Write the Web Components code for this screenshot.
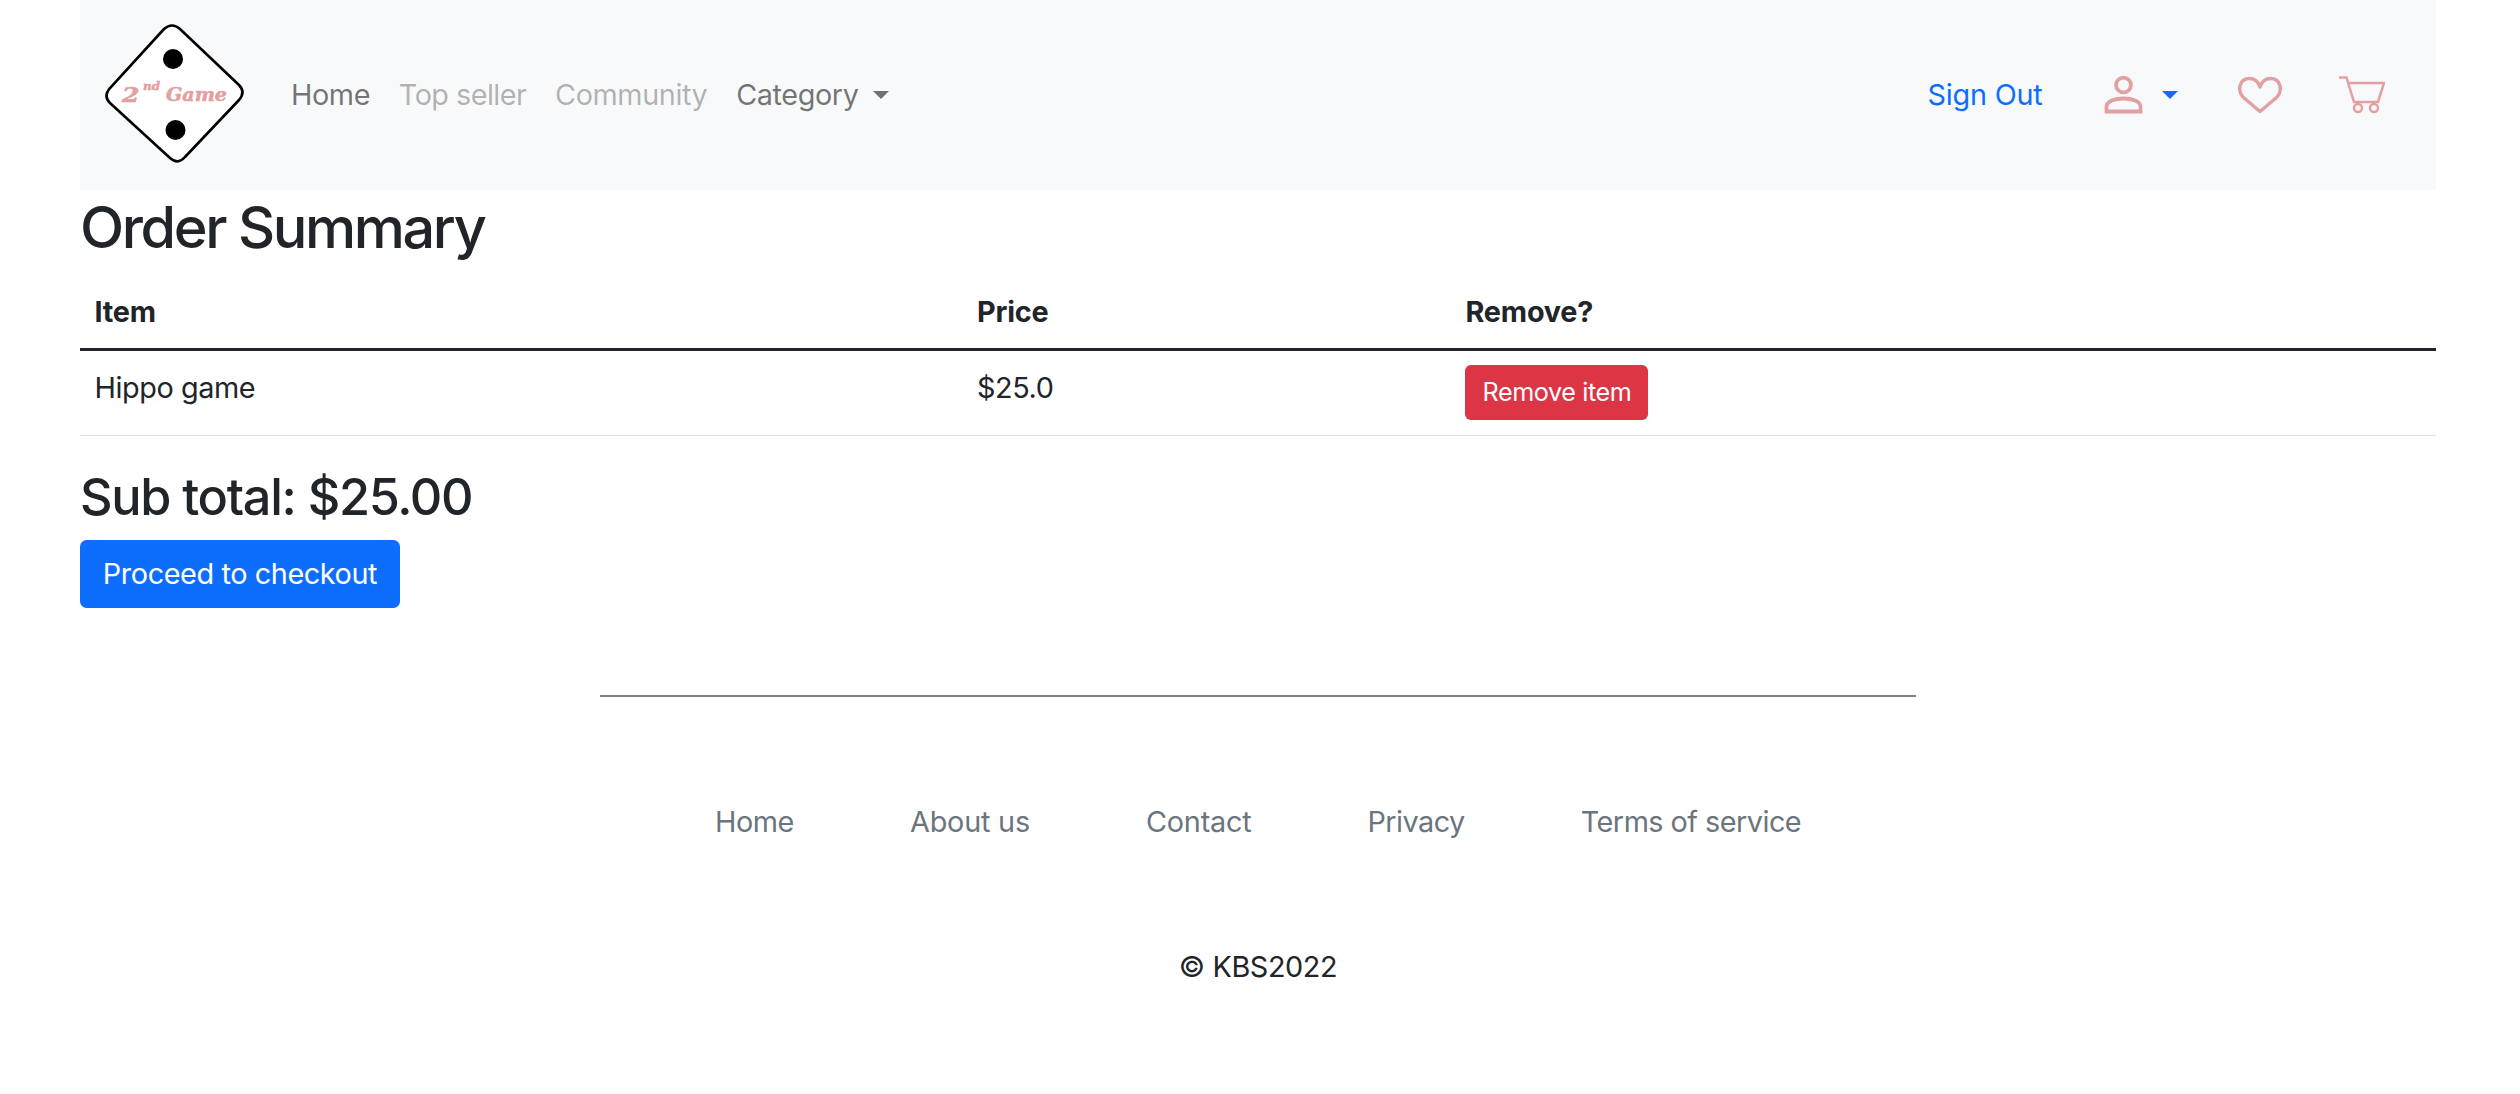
<!DOCTYPE html>
<html lang="en">
<head>
<meta charset="utf-8">
<title>Order Summary</title>
<style>
    html, body { margin: 0; background: #fff; }
    body { font-family: Inter, "Liberation Sans", sans-serif; font-size: 28.8px; line-height: 1.5; letter-spacing: -.4px; color: #212529; }
</style>
</head>
<body>
<shop-page>
    <shop-navbar></shop-navbar>
    <order-summary></order-summary>
    <shop-footer></shop-footer>
</shop-page>

<script>
class shopPage extends HTMLElement {
    constructor() {
        super()
        this.attachShadow({ mode: "open" })
        this.shadowRoot.innerHTML = `
        <style>
        :host {
            display: block;
            padding: 0 84px 0 80px;
            min-height: 1094px;
            box-sizing: border-box;
        }
        </style>
        <slot></slot>
        `
    }
}

class shopButton extends HTMLElement {
    constructor() {
        super()
        this.attachShadow({ mode: "open" })
        this.shadowRoot.innerHTML = `
        <style>
        :host {
            display: inline-flex;
            align-items: center;
            justify-content: center;
            box-sizing: border-box;
            color: #fff;
            width: 320px;
            height: 68px;
            font-size: 28.8px;
            border-radius: 6.5px;
            background: #0d6efd;
        }
        :host([variant="danger"]) {
            background: #dc3545;
            width: 183px;
            height: 55px;
            padding-top: 1.5px;
            font-size: 25.2px;
            border-radius: 5.8px;
        }
        </style>
        <slot></slot>
        `
    }
}

class navItem extends HTMLElement {
    constructor() {
        super()
        this.attachShadow({ mode: "open" })
        this.shadowRoot.innerHTML = `
        <style>
        :host {
            display: inline-flex;
            align-items: center;
            color: rgba(0, 0, 0, .55);
            padding: 0 14.4px;
        }
        :host([disabled]) { color: rgba(0, 0, 0, .3); }
        .caret {
            display: none;
            width: 0;
            height: 0;
            margin-left: 14.5px;
            border-top: 8.6px solid currentColor;
            border-left: 8.6px solid transparent;
            border-right: 8.6px solid transparent;
        }
        :host([caret]) .caret { display: block; }
        </style>
        <slot></slot><span class="caret"></span>
        `
    }
}

class shopNavbar extends HTMLElement {
    constructor() {
        super()
        this.attachShadow({ mode: "open" })
        const template = document.createElement('template')
        template.innerHTML = `
        <style>
        :host {
            display: flex;
            align-items: center;
            height: 190px;
            background: #f8f9fa;
            padding: 0 51px 0 20px;
            box-sizing: border-box;
        }
        .logo { width: 150px; height: 150px; margin-right: 26.6px; flex: none; }
        .logo text {
            font-family: "DejaVu Serif", "Liberation Serif", serif;
            font-weight: 700;
            font-style: italic;
            letter-spacing: 0;
            fill: #e2a0a0;
            stroke: #e2a0a0;
            stroke-width: .5;
        }
        .tight { letter-spacing: -.55px; }
        .right { display: flex; align-items: center; margin-left: auto; }
        .signout { color: #0d6efd; letter-spacing: -.2px; margin-right: 61px; }
        .icon { display: block; flex: none; fill: none; stroke: #e2a0a0; }
        .user { display: flex; align-items: center; margin-right: 59px; }
        .user .caret {
            margin-left: 18px;
            width: 0;
            height: 0;
            border-top: 8.6px solid #0d6efd;
            border-left: 8.4px solid transparent;
            border-right: 8.4px solid transparent;
        }
        .heart { margin-right: 56.5px; }
        </style>
        <svg class="logo" viewBox="0 0 150 150">
            <path d="M64 9 Q72 2 80 9 L139 65 Q146 72 139 80 L85 137 Q78 145 70 138 L10 83 Q3 76 10 68 Z" fill="#fff" stroke="#000" stroke-width="2.6"/>
            <circle cx="73" cy="39" r="10"/>
            <circle cx="75.5" cy="110" r="10"/>
            <text x="22" y="81.5" font-size="20" textLength="17.5" lengthAdjust="spacingAndGlyphs">2</text>
            <text x="43" y="70" font-size="11" textLength="17" lengthAdjust="spacingAndGlyphs">nd</text>
            <text x="66" y="81" font-size="18" textLength="61" lengthAdjust="spacingAndGlyphs">Game</text>
        </svg>
        <nav-item>Home</nav-item>
        <nav-item class="tight" disabled>Top seller</nav-item>
        <nav-item disabled>Community</nav-item>
        <nav-item caret>Category</nav-item>
        <div class="right">
            <span class="signout">Sign Out</span>
            <div class="user">
                <svg class="icon" width="40" height="40" viewBox="0 0 40 40" stroke-width="3.8">
                    <circle cx="19.5" cy="10" r="7.4"/>
                    <path d="M2.5 36.5 V32 C2.5 26 11 23.5 19.5 23.5 C28 23.5 36.5 26 36.5 32 V36.5 Z"/>
                </svg>
                <span class="caret"></span>
            </div>
            <svg class="icon heart" width="46" height="38" viewBox="0 0 46 38" stroke-width="3.4">
                <path d="M23 35.5 L7 22 C-1 14 3 2.5 12.5 2.5 C17 2.5 21 5 23 11 C25 5 29 2.5 33.5 2.5 C43 2.5 47 14 39 22 Z" stroke-linejoin="round"/>
            </svg>
            <svg class="icon" width="46" height="38" viewBox="0 0 46 38" stroke-width="2.5">
                <path d="M0 1.5 H7.5 L15 26 H39 L45 7 H10"/>
                <circle cx="19" cy="32" r="4"/>
                <circle cx="35" cy="32" r="4"/>
            </svg>
        </div>
        `
        this.shadowRoot.appendChild(template.content.cloneNode(true))
    }
}

class orderSummary extends HTMLElement {
    constructor() {
        super()
        this.attachShadow({ mode: "open" })
        const template = document.createElement('template')
        template.innerHTML = `
        <style>
        :host { display: block; color: #212529; }
        h2, h3 { margin: 0; font-weight: 500; line-height: 1.2; }
        h2 { font-size: 57.6px; letter-spacing: -2.4px; padding-top: 3px; margin-bottom: 13.5px; }
        h3 { font-size: 50.4px; letter-spacing: -1.3px; padding-top: 2px; margin-bottom: 12.4px; }
        table {
            width: 100%;
            border-collapse: separate;
            border-spacing: 0;
            table-layout: fixed;
            margin-bottom: 28.8px;
        }
        th, td {
            text-align: left;
            padding: 14.4px;
            vertical-align: top;
        }
        th { font-weight: 700; letter-spacing: -.2px; border-bottom: 3px solid #212529; }
        td { border-bottom: 1.8px solid #dee2e6; height: 55px; padding-top: 15.4px; padding-bottom: 13.9px; }
        .c1 { width: 882.6px; }
        .c2 { width: 488.5px; }
        td shop-button { vertical-align: top; margin-top: -1px; }
        </style>
        <h2>Order Summary</h2>
        <table>
            <colgroup><col class="c1"><col class="c2"><col></colgroup>
            <thead>
                <tr><th>Item</th><th>Price</th><th>Remove?</th></tr>
            </thead>
            <tbody>
                <tr>
                    <td>Hippo game</td>
                    <td>$25.0</td>
                    <td><shop-button variant="danger">Remove item</shop-button></td>
                </tr>
            </tbody>
        </table>
        <h3>Sub total: $25.00</h3>
        <shop-button>Proceed to checkout</shop-button>
        `
        this.shadowRoot.appendChild(template.content.cloneNode(true))
    }
}

class shopFooter extends HTMLElement {
    constructor() {
        super()
        this.attachShadow({ mode: "open" })
        const template = document.createElement('template')
        template.innerHTML = `
        <style>
        :host {
            display: flex;
            flex-direction: column;
            align-items: center;
            padding-top: 87px;
        }
        hr {
            width: 1316px;
            height: 2px;
            margin: 0;
            border: 0;
            background: #808080;
        }
        nav {
            display: flex;
            gap: 116px;
            color: #6c757d;
            margin-top: 103.5px;
        }
        .wide { letter-spacing: -.2px; }
        .narrow { letter-spacing: -.52px; }
        p { margin: 102px 0 0; color: #212529; font-size: 28.8px; }
        </style>
        <hr>
        <nav>
            <span>Home</span>
            <span class="wide">About us</span>
            <span class="wide">Contact</span>
            <span class="narrow">Privacy</span>
            <span class="narrow">Terms of service</span>
        </nav>
        <p>© KBS2022</p>
        `
        this.shadowRoot.appendChild(template.content.cloneNode(true))
    }
}

customElements.define('shop-page', shopPage)
customElements.define('shop-button', shopButton)
customElements.define('nav-item', navItem)
customElements.define('shop-navbar', shopNavbar)
customElements.define('order-summary', orderSummary)
customElements.define('shop-footer', shopFooter)
</script>
</body>
</html>
